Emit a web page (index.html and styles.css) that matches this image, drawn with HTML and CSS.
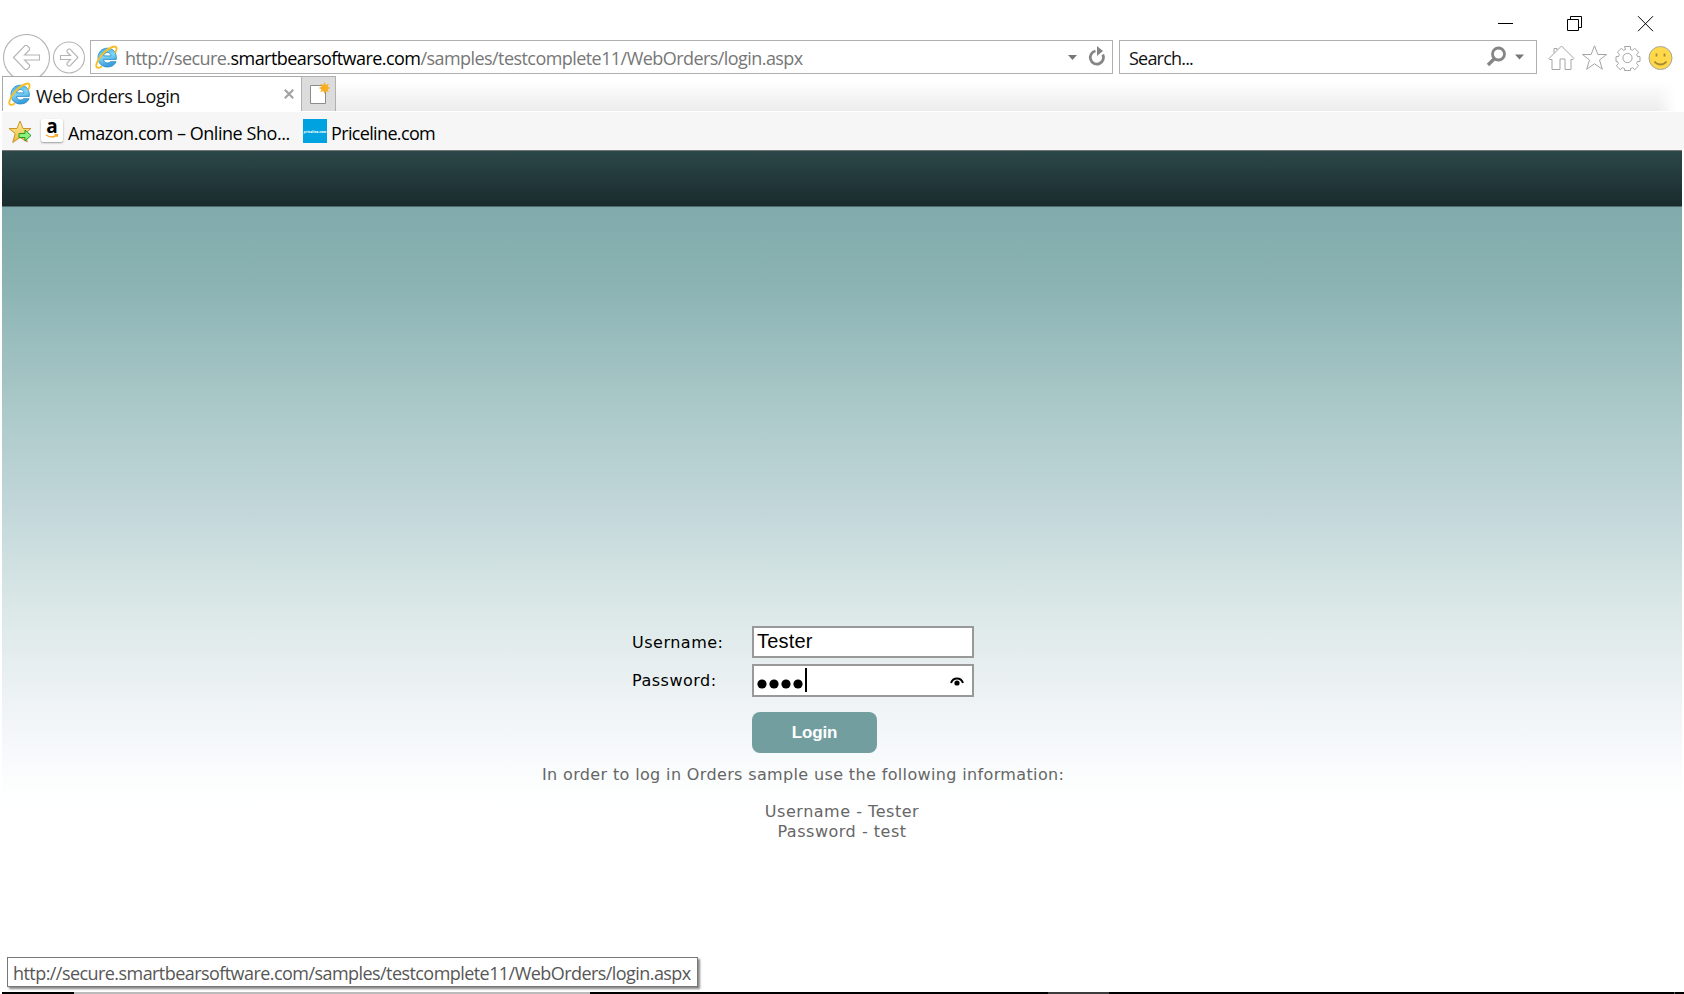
FILE: index.html
```
<!DOCTYPE html>
<html lang="en">
<head>
<meta charset="utf-8">
<title>Web Orders Login</title>
<link rel="stylesheet" href="styles.css">
</head>
<body>
<svg class="defs" width="0" height="0">
  <defs>
    <linearGradient id="blue" x1="0" y1="0" x2="0.3" y2="1"><stop offset="0" stop-color="#3aa5e0"/><stop offset=".5" stop-color="#7fd6f6"/><stop offset="1" stop-color="#3a9edb"/></linearGradient>
    <linearGradient id="gold" x1="0" y1="0" x2="0" y2="1"><stop offset="0" stop-color="#fff0a0"/><stop offset="1" stop-color="#eeb733"/></linearGradient>
    <symbol id="ie" viewBox="0 0 24 24">
      <path d="M12.300 3.200C6.800 3.200 3 7.200 3 12.700S7 22 12.400 22c4 0 7.200-1.900 8.700-5.300h-5.700c-.7.900-1.700 1.300-3 1.300-2.200 0-3.700-1.300-3.800-3.600h12.700C21.900 7.600 18.200 3.200 12.300 3.200zM8.700 10.900c.3-2.100 1.700-3.400 3.700-3.400s3.400 1.300 3.600 3.400z" fill="url(#blue)" stroke="#2387c6" stroke-width=".8"/>
      <path d="M20.500 7.200c2.200-4.400.8-6.600-3-5.200C10.400 4.500 3.200 12.700 1.500 19.100c-1 4 1.400 4.600 4.800 2.600" fill="none" stroke="#f8bf25" stroke-width="1.900" stroke-linecap="round"/>
    </symbol>
  </defs>
</svg>
<div class="window">
  <div class="titlebar">
    <svg width="160" height="20" viewBox="0 0 160 20" fill="none" stroke="#000" stroke-width="1">
      <path d="M0 10.500h15M69.500 6.500h11v11h-11zM72.500 6.500v-3h11v11h-3M140 3.200l15 15M155 3.200l-15 15"/>
    </svg>
  </div>
  <div class="navbar">
    <svg class="nav-arrows" width="88" height="48" viewBox="0 0 88 48" fill="#fff" stroke="#b4b4b4" stroke-width="1.100">
      <circle cx="26.500" cy="23.500" r="23"/><circle cx="69" cy="23.500" r="15.500"/>
      <path d="M13.500 23.500l11.500-12 2 0 2.500 2.500 0 2-5 5H39.500v5H24.500l5 5 0 2-2.500 2.500-2 0zM60.500 21.500h10l-3.500-3.500 0-1.500 1.500-1.500 1.500 0 8 8.500-8 8.500-1.500 0-1.500-1.500 0-1.500 3.500-3.500h-10z"/>
    </svg>
    <div class="address">
      <svg class="ie" width="24" height="24"><use href="#ie"/></svg>
      <span class="url">http://secure.<b>smartbearsoftware.com</b>/samples/testcomplete11/WebOrders/login.aspx</span>
      <svg class="addr-tools" width="38" height="22" viewBox="0 0 38 22"><path d="M0 9h9l-4.500 5z" fill="#777"/><path d="M34.800 8.500A6.600 6.600 0 1 1 27.500 5" fill="none" stroke="#858585" stroke-width="2.800"/><path d="M29 0l6 5-6 5z" fill="#858585"/></svg>
    </div>
    <div class="search">
      <span>Search...</span>
      <svg width="40" height="22" viewBox="0 0 40 22"><circle cx="12.500" cy="8" r="6" fill="none" stroke="#858585" stroke-width="2.800"/><path d="M8.500 12.500L2 19" stroke="#858585" stroke-width="3.400"/><path d="M29 8.500h9l-4.500 5z" fill="#777"/></svg>
    </div>
    <svg class="tools" width="126" height="26" viewBox="0 0 126 26" fill="#fff" stroke="#a5a5a5" stroke-width="1">
      <path d="M1 13.500L13.500 1 26 13.500l-1 1h-2v10h-6V14h-5v10.500H4v-10H1.500zM6 8V3.500h3V5"/>
      <path d="M46.500.800l3.400 8.700h8.600l-7 5.500 2.800 9.200-7.800-5.400-7.800 5.400 2.800-9.200-7-5.500h8.600z"/>
      <path d="M76.500 1.500h6v3l2 .8 2.200-2 3.900 3.900-2 2.300.9 2.100h2.500v4.800h-2.500l-.9 2.200 2 2.200-3.900 3.900-2.200-2-2 .8v2h-6v-2l-2-.8-2.200 2-3.900-3.900 2-2.200-.9-2.200H68v-4.800h2.500l.9-2.100-2-2.300 3.900-3.900 2.200 2 2-.8z" stroke-linejoin="round"/><circle cx="79.500" cy="13" r="4.600"/>
      <circle cx="112.500" cy="13" r="11.500" fill="#ffd94a"/><path d="M108.500 8.500v3M116.500 8.500v3M106.500 16.500c3 4 9 4 12 0" fill="none" stroke="#a48b35" stroke-width="1.800"/>
    </svg>
  </div>
  <div class="tabs">
    <div class="tab">
      <svg width="24" height="24"><use href="#ie"/></svg>
      <span>Web Orders Login</span>
      <svg class="close" width="10" height="10" viewBox="0 0 10 10"><path d="M.8.800l8.400 8.400M9.200.800L.800 9.200" stroke="#a2a2a2" stroke-width="2.100"/></svg>
    </div>
    <div class="new-tab"><svg width="22" height="24" viewBox="0 0 22 24"><path d="M1.500 3.500h15v18h-15z" fill="#fff" stroke="#8c8c8c"/><path d="M15.500 0l1.300 3 3-1.200-1.200 3 3 1.200-3 1.300 1.200 3-3-1.200-1.300 2.900-1.200-2.900-3 1.200 1.200-3-3-1.300 3-1.200-1.200-3 3 1.200z" fill="#f9ae22"/></svg></div>
  </div>
  <div class="favorites">
    <svg class="fav-star" width="24" height="24" viewBox="0 0 24 24"><path d="M12 1l3 7.500h8l-6.200 5 2.500 8.500L12 17.500 4.700 22.500l2.500-9L1 8.500h8z" fill="url(#gold)" stroke="#c9942d"/><path d="M11 13.500h6V10l6 5.500-6 5.500v-3.500h-6z" fill="#8df07e" stroke="#249b28"/></svg>
    <span class="amazon">a<svg width="14" height="5" viewBox="0 0 14 5"><path d="M1 1q6 4 11 0M9.500.500L12.500.700 12 3" fill="none" stroke="#f7a51c" stroke-width="1.500"/></svg></span>
    <span class="fav-a">Amazon.com – Online Sho...</span>
    <span class="priceline"><i>priceline.com</i></span>
    <span class="fav-p">Priceline.com</span>
  </div>
  <div class="page">
    <div class="banner"></div>
    <main>
      <form class="login">
        <label for="user">Username:</label><input id="user" value="Tester">
        <label for="pass">Password:</label>
        <div class="pass" id="pass">
          <svg class="dots" width="50" height="26" viewBox="0 0 50 26"><g fill="#000"><circle cx="5" cy="16" r="4.600"/><circle cx="17" cy="16" r="4.600"/><circle cx="29" cy="16" r="4.600"/><circle cx="41" cy="16" r="4.600"/></g><path d="M49 0v24" stroke="#000" stroke-width="2"/></svg>
          <svg class="eye" width="14" height="10" viewBox="0 0 14 10"><path d="M1 6C3 0 11 0 13 6" fill="none" stroke="#000" stroke-width="2"/><circle cx="7" cy="6" r="2.600"/></svg>
        </div>
        <button type="button">Login</button>
      </form>
      <p class="hint">In order to log in Orders sample use the following information:</p>
      <p class="creds"><span class="c1">Username - Tester</span><span class="c2">Password - test</span></p>
    </main>
  </div>
  <div class="taskbar"><i class="k1"></i><i class="k2"></i><i class="k3"></i><i class="k4"></i><i class="k5"></i></div>
</div>
<div class="status">http://secure.smartbearsoftware.com/samples/testcomplete11/WebOrders/login.aspx</div>
</body>
</html>
```
FILE: styles.css
```
* { box-sizing: border-box; }
body { margin: 0; width: 1684px; height: 994px; overflow: hidden; background: #fff; font-family: "Open Sans", "Noto Sans", sans-serif; font-size: 18px; color: #111; }
svg { display: block; flex: none; }
.defs { position: absolute; }
.window { display: flex; flex-direction: column; height: 994px; }
.titlebar { height: 34px; padding: 13px 0 0 1498px; }
.navbar { display: flex; height: 42px; overflow: hidden; }
.nav-arrows { margin-right: 2px; }
.address, .search { display: flex; align-items: center; height: 34px; margin-top: 6px; border: 1px solid #b0b0b0; white-space: nowrap; }
.address { width: 1023px; padding-left: 4px; margin-right: 6px; }
.url { width: 943px; padding-top: 2px; margin-left: 6px; color: #777; letter-spacing: -0.56px; }
.url b { font-weight: 400; color: #000; }
.search { width: 418px; justify-content: space-between; padding: 0 10px 0 9px; }
.search span { padding-top: 2px; letter-spacing: -0.8px; }
.tools { margin: 11px 0 0 11px; }
.tabs { display: flex; height: 36px; margin-left: 2px; border-bottom: 1px solid #fff; background: linear-gradient(90deg, transparent 1655px, #fff 1674px), linear-gradient(#fff, #fff 5px, #ececec); }
.tab { display: flex; align-items: center; width: 299px; padding-left: 5px; border: solid #a9a9a9; border-width: 1px 0 0 1px; background: #fff; white-space: nowrap; }
.tab span { width: 248px; padding-top: 3px; margin-left: 4px; letter-spacing: -0.45px; }
.new-tab { width: 35px; border: 1px solid #b0b0b0; border-bottom: 0; background: #dcdcdc; padding: 5px 0 0 7px; }
.favorites { display: flex; align-items: center; height: 38px; margin-left: 2px; padding-left: 6px; background: #f6f6f6; white-space: nowrap; color: #000; }
.fav-star { margin-top: 2px; }
.amazon { width: 22px; height: 23px; margin: 0 5px 2px 9px; border-radius: 2px; background: #fff; box-shadow: 0 1px 2px #999; font: bold 19px/15px "Open Sans", sans-serif; text-align: center; }
.amazon svg { margin: 0 auto; }
.fav-a { width: 230px; padding-top: 3px; letter-spacing: -0.45px; }
.fav-p { padding-top: 3px; letter-spacing: -0.65px; }
.priceline { display: flex; align-items: center; justify-content: center; width: 24px; height: 24px; margin: 0 4px 0 5px; background: #00a3e0; color: #fff; }
.priceline i { font-size: 3.5px; font-weight: 700; }
.page { width: 1680px; height: 842px; margin-left: 2px; }
.banner { height: 57px; border-top: 1px solid #777; border-bottom: 1px solid #4e6b6c; background: linear-gradient(#2c4749, #192b2d); }
main { height: 785px; padding-top: 419px; background: linear-gradient(#80aaab 0, #8bb3b4 76px, #b0cccc 222px, #c1d6d9 297px, #dbe8e7 403px, #eaf0f2 473px, #f5f8fb 533px, #fdfffe 585px, #fff 605px); font-family: "DejaVu Sans", sans-serif; font-size: 16px; }
.login { display: grid; grid-template-columns: 120px 222px; grid-template-rows: 32px 33px 41px; row-gap: 6px; margin-left: 630px; color: #000; }
.login label { line-height: 34px; letter-spacing: 0.5px; }
.login input, .pass { width: 222px; border: 2px solid #999; background: #fff; }
.login input { height: 32px; padding: 0 3px 2px 3px; font: 20px "Liberation Sans", sans-serif; letter-spacing: 0.2px; outline: 0; }
.pass { display: flex; justify-content: space-between; padding: 2px 8px 0 3px; }
.eye { margin-top: 9px; }
.login button { grid-column: 2; width: 125px; height: 41px; margin-top: 9px; border: 0; border-radius: 8px; background: #739e9f; color: #fff; font: bold 17px "Liberation Sans", sans-serif; letter-spacing: -0.2px; }
.hint { margin: 21px 0 0 540px; line-height: 20px; color: #666; white-space: nowrap; letter-spacing: 0.36px; }
.creds { display: flex; flex-direction: column; align-items: center; width: 1680px; margin: 17px 0 0; line-height: 20px; color: #666; letter-spacing: 0.52px; }
.taskbar { display: flex; height: 2px; margin-left: 2px; background: #000; }
.k1 { width: 72px; } .k2 { width: 516px; background: #bbb; } .k3 { width: 458px; } .k4 { width: 61px; background: #3c3c3c; } .k5 { width: 566px; border-right: 1px solid #555; }
.status { position: absolute; left: 7px; top: 957px; width: 691px; height: 30px; padding-left: 5px; border: 1px solid #777; background: #fff; box-shadow: 2px 2px 2px #888; color: #575757; line-height: 31px; white-space: nowrap; letter-spacing: -0.56px; }
```
